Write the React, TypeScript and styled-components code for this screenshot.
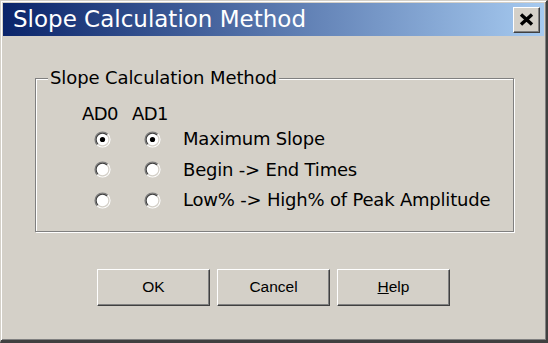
import React from "react";
import styled, { createGlobalStyle } from "styled-components";

const GlobalStyle = createGlobalStyle`
  html, body { margin: 0; padding: 0; background: #d4d0c8; }
  body { font-family: "DejaVu Sans", "Liberation Sans", sans-serif; }
  * { box-sizing: border-box; }
`;

const Window = styled.div`
  width: 548px;
  height: 343px;
  overflow: hidden;
  display: flex;
  flex-direction: column;
  background: #d4d0c8;
  border-style: solid;
  border-width: 1px 2px 3px 1px;
  border-color: #d4d0c8 #404040 #404040 #d4d0c8;
  box-shadow: inset 1px 1px 0 #ffffff, inset -1px -1px 0 #808080;
  padding: 2px 2px 1px 2px;
`;

const TitleBar = styled.div`
  height: 33px;
  flex: none;
  display: flex;
  align-items: center;
  justify-content: space-between;
  padding: 0 4px 0 10px;
  background: linear-gradient(to right, #0a246a 0%, #a6caf0 100%);
`;

const TitleText = styled.span`
  color: #ffffff;
  font-family: "DejaVu Sans", sans-serif;
  font-size: 23px;
  line-height: 33px;
  white-space: nowrap;
`;

const CloseButton = styled.div`
  width: 27px;
  height: 26px;
  display: flex;
  align-items: center;
  justify-content: center;
  background: #d4d0c8;
  border-style: solid;
  border-width: 1px;
  border-color: #ffffff #404040 #404040 #ffffff;
  box-shadow: inset -1px -1px 0 #808080;
`;

const Body = styled.div`
  flex: 1;
  display: flex;
  flex-direction: column;
  padding: 32px 29px 0 32px;
`;

const Group = styled.fieldset`
  margin: 0;
  padding: 0;
  min-inline-size: 0;
  border: 1px solid #808080;
  box-shadow: inset 1px 1px 0 #ffffff, 1px 1px 0 #ffffff;
  width: 479px;
`;

const Legend = styled.legend`
  margin-left: 12px;
  padding: 0 2px;
  background: #d4d0c8;
  font-size: 18px;
  line-height: 20px;
  letter-spacing: -0.1px;
  color: #000;
`;

const ChoiceGrid = styled.div`
  display: grid;
  grid-template-columns: 50px 50px auto;
  grid-template-rows: 20px repeat(3, 30.5px);
  align-items: center;
  padding: 16px 0 15px 41px;
  font-size: 18px;
  color: #000;
`;

const ColumnHead = styled.span`
  justify-self: start;
  margin-left: 5px;
  line-height: 20px;
  letter-spacing: -0.6px;
`;

const RadioCell = styled.span`
  display: flex;
  justify-content: center;
  align-items: center;
`;

const OptionLabel = styled.span`
  margin-left: 6px;
  white-space: nowrap;
  line-height: 20px;
  letter-spacing: -0.2px;
`;

const ButtonRow = styled.div`
  display: flex;
  justify-content: center;
  gap: 7px;
  margin-top: 37px;
  padding-right: 3px;
`;

const Button = styled.div`
  width: 113px;
  height: 37px;
  display: flex;
  align-items: center;
  justify-content: center;
  background: #d4d0c8;
  border-style: solid;
  border-width: 1px;
  border-color: #ffffff #404040 #404040 #ffffff;
  box-shadow: inset -1px -1px 0 #808080;
  font-family: "Liberation Sans", sans-serif;
  font-size: 15.5px;
  color: #000;
`;

const AccessKey = styled.span`
  text-decoration: underline;
`;

const RadioIcon: React.FC<{ checked?: boolean }> = ({ checked }) => {
  const c = 8.5;
  const arc = (r: number, tl: boolean) => {
    const d = r / Math.SQRT2;
    const bl = `${c - d} ${c + d}`;
    const tr = `${c + d} ${c - d}`;
    return tl
      ? `M ${bl} A ${r} ${r} 0 0 1 ${tr}`
      : `M ${tr} A ${r} ${r} 0 0 1 ${bl}`;
  };
  return (
    <svg width="17" height="17" viewBox="0 0 17 17">
      <circle cx={c} cy={c} r={7} fill="#ffffff" />
      <path d={arc(7.5, true)} stroke="#808080" strokeWidth="1.2" fill="none" />
      <path d={arc(7.5, false)} stroke="#ffffff" strokeWidth="1.2" fill="none" />
      <path d={arc(6.4, true)} stroke="#404040" strokeWidth="1.2" fill="none" />
      <path d={arc(6.4, false)} stroke="#d4d0c8" strokeWidth="1.2" fill="none" />
      {checked && <circle cx={c} cy={c} r={2.6} fill="#000000" />}
    </svg>
  );
};

const options = [
  { label: "Maximum Slope", checked: true },
  { label: "Begin -> End Times", checked: false },
  { label: "Low% -> High% of Peak Amplitude", checked: false },
];

export default function App() {
  return (
    <>
      <GlobalStyle />
      <Window>
        <TitleBar>
          <TitleText>Slope Calculation Method</TitleText>
          <CloseButton>
            <svg width="15" height="13" viewBox="0 0 15 13">
              <path d="M2 1.5 L13 11.5 M13 1.5 L2 11.5" stroke="#000" strokeWidth="3.4" />
            </svg>
          </CloseButton>
        </TitleBar>
        <Body>
          <Group>
            <Legend>Slope Calculation Method</Legend>
            <ChoiceGrid>
              <ColumnHead>AD0</ColumnHead>
              <ColumnHead>AD1</ColumnHead>
              <span />
              {options.map((o) => (
                <React.Fragment key={o.label}>
                  <RadioCell>
                    <RadioIcon checked={o.checked} />
                  </RadioCell>
                  <RadioCell>
                    <RadioIcon checked={o.checked} />
                  </RadioCell>
                  <OptionLabel>{o.label}</OptionLabel>
                </React.Fragment>
              ))}
            </ChoiceGrid>
          </Group>
          <ButtonRow>
            <Button>OK</Button>
            <Button>Cancel</Button>
            <Button>
              <AccessKey>H</AccessKey>elp
            </Button>
          </ButtonRow>
        </Body>
      </Window>
    </>
  );
}
